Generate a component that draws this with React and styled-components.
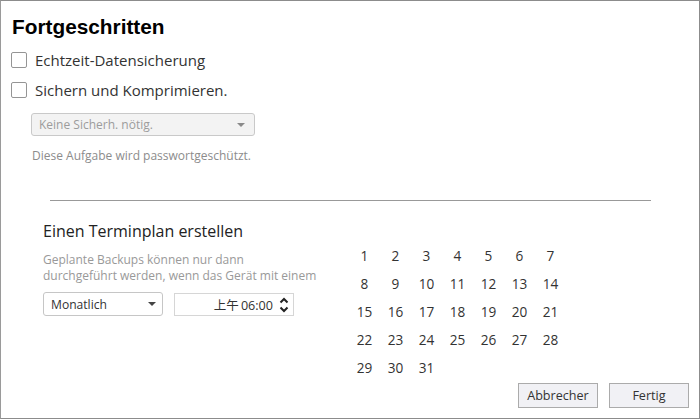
import React from "react";
import styled, { createGlobalStyle } from "styled-components";

const Global = createGlobalStyle`
  html, body { margin: 0; padding: 0; background: #fff; }
  body { font-family: "Open Sans", "Noto Sans", sans-serif; }
  * { box-sizing: border-box; }
`;

const Frame = styled.div`
  width: 700px;
  height: 419px;
  border: 1px solid #8c8c8c;
  border-left-color: #9a9a9a;
  background: #fff;
  display: flex;
  flex-direction: column;
  color: #333;
`;

const Title = styled.h1`
  margin: 13px 0 0 11px;
  font-family: "Liberation Sans", Arial, sans-serif;
  font-weight: 700;
  font-size: 20.8px;
  line-height: 25px;
  color: #000;
`;

const CheckRow = styled.label`
  display: flex;
  align-items: center;
  height: 30px;
  padding-left: 10px;
  gap: 8px;
  font-size: 15px;
  color: #333;
`;

const Box = styled.span`
  width: 16px;
  height: 16px;
  border: 1.5px solid #959595;
  border-radius: 2px;
  background: #fff;
  flex: none;
`;

const DisabledSelect = styled.div`
  margin: 8px 0 0 30px;
  width: 224px;
  height: 23px;
  border: 1px solid #c9c9c9;
  border-radius: 3px;
  background: #f3f3f3;
  display: flex;
  align-items: center;
  justify-content: space-between;
  padding: 0 9px 0 7px;
  font-size: 12px;
  color: #9c9c9c;
`;

const Arrow = styled.span`
  width: 0;
  height: 0;
  border-left: 4px solid transparent;
  border-right: 4px solid transparent;
  border-top: 4px solid ${(p) => p.$color || "#888"};
`;

const Note = styled.div`
  margin: 12px 0 0 31px;
  font-size: 12px;
  line-height: 16px;
  color: #8c8c8c;
`;

const Divider = styled.hr`
  margin: 36px 0 0 49px;
  width: 601px;
  border: none;
  border-top: 1px solid #999;
  height: 0;
`;

const Lower = styled.div`
  display: flex;
  flex: 1;
  padding-right: 10px;
`;

const LeftCol = styled.div`
  width: 306px;
  margin-left: 42px;
  padding-top: 19px;
`;

const Heading = styled.div`
  font-size: 16px;
  line-height: 22px;
  color: #222;
`;

const Desc = styled.div`
  margin-top: 10px;
  font-size: 12px;
  line-height: 16px;
  color: #999;
  width: 300px;
`;

const Controls = styled.div`
  display: flex;
  gap: 11px;
  margin-top: 8px;
`;

const Select = styled.div`
  width: 120px;
  height: 24px;
  border: 1px solid #c6c6c6;
  border-radius: 3px;
  display: flex;
  align-items: center;
  justify-content: space-between;
  padding: 0 6px 0 7px;
  font-size: 12.1px;
  color: #333;
  background: #fff;
`;

const TimeInput = styled.div`
  width: 120px;
  height: 23px;
  margin-top: 1px;
  border: 1px solid #d6d6d6;
  display: flex;
  align-items: center;
  justify-content: flex-end;
  gap: 6px;
  padding-right: 4px;
  font-size: 12.6px;
  color: #333;
  font-family: "Open Sans", "Noto Sans CJK TC", sans-serif;
`;

const Cjk = styled.span`
  font-family: "Noto Sans CJK TC", sans-serif;
  font-size: 12.5px;
  margin-right: 2px;
`;

const RightCol = styled.div`
  flex: 1;
  display: flex;
  flex-direction: column;
  padding-top: 40px;
`;

const Grid = styled.div`
  display: grid;
  grid-template-columns: repeat(7, 31px);
  grid-auto-rows: 28px;
`;

const Day = styled.div`
  display: flex;
  align-items: center;
  justify-content: center;
  font-size: 13.6px;
  color: #333;
`;

const Footer = styled.div`
  display: flex;
  justify-content: flex-end;
  gap: 11px;
  margin-top: 2px;
`;

const Button = styled.button`
  width: 80px;
  height: 25px;
  border: 1px solid #ababab;
  background: #f1f1f5;
  font-family: "Open Sans", sans-serif;
  font-size: 12.6px;
  color: #333;
  padding: 0;
`;

const Spinner = () => (
  <svg width="10" height="18" viewBox="0 0 10 18">
    <path d="M1.5 6.5 L5 3 L8.5 6.5" fill="none" stroke="#222" strokeWidth="2" />
    <path d="M1.5 11.5 L5 15 L8.5 11.5" fill="none" stroke="#222" strokeWidth="2" />
  </svg>
);

export default function App() {
  const days = Array.from({ length: 31 }, (_, i) => i + 1);
  return (
    <>
      <Global />
      <Frame>
        <Title>Fortgeschritten</Title>
        <CheckRow style={{ marginTop: 6 }}>
          <Box />
          Echtzeit-Datensicherung
        </CheckRow>
        <CheckRow>
          <Box />
          Sichern und Komprimieren.
        </CheckRow>
        <DisabledSelect>
          <span>Keine Sicherh. nötig.</span>
          <Arrow $color="#8a8a8a" />
        </DisabledSelect>
        <Note>Diese Aufgabe wird passwortgeschützt.</Note>
        <Divider />
        <Lower>
          <LeftCol>
            <Heading>Einen Terminplan erstellen</Heading>
            <Desc>
              Geplante Backups können nur dann
              <br />
              durchgeführt werden, wenn das Gerät mit einem
            </Desc>
            <Controls>
              <Select>
                <span>Monatlich</span>
                <Arrow $color="#444" />
              </Select>
              <TimeInput>
                <span>
                  <Cjk>上午</Cjk>06:00
                </span>
                <Spinner />
              </TimeInput>
            </Controls>
          </LeftCol>
          <RightCol>
            <Grid>
              {days.map((d) => (
                <Day key={d}>{d}</Day>
              ))}
            </Grid>
            <Footer>
              <Button>Abbrecher</Button>
              <Button>Fertig</Button>
            </Footer>
          </RightCol>
        </Lower>
      </Frame>
    </>
  );
}
